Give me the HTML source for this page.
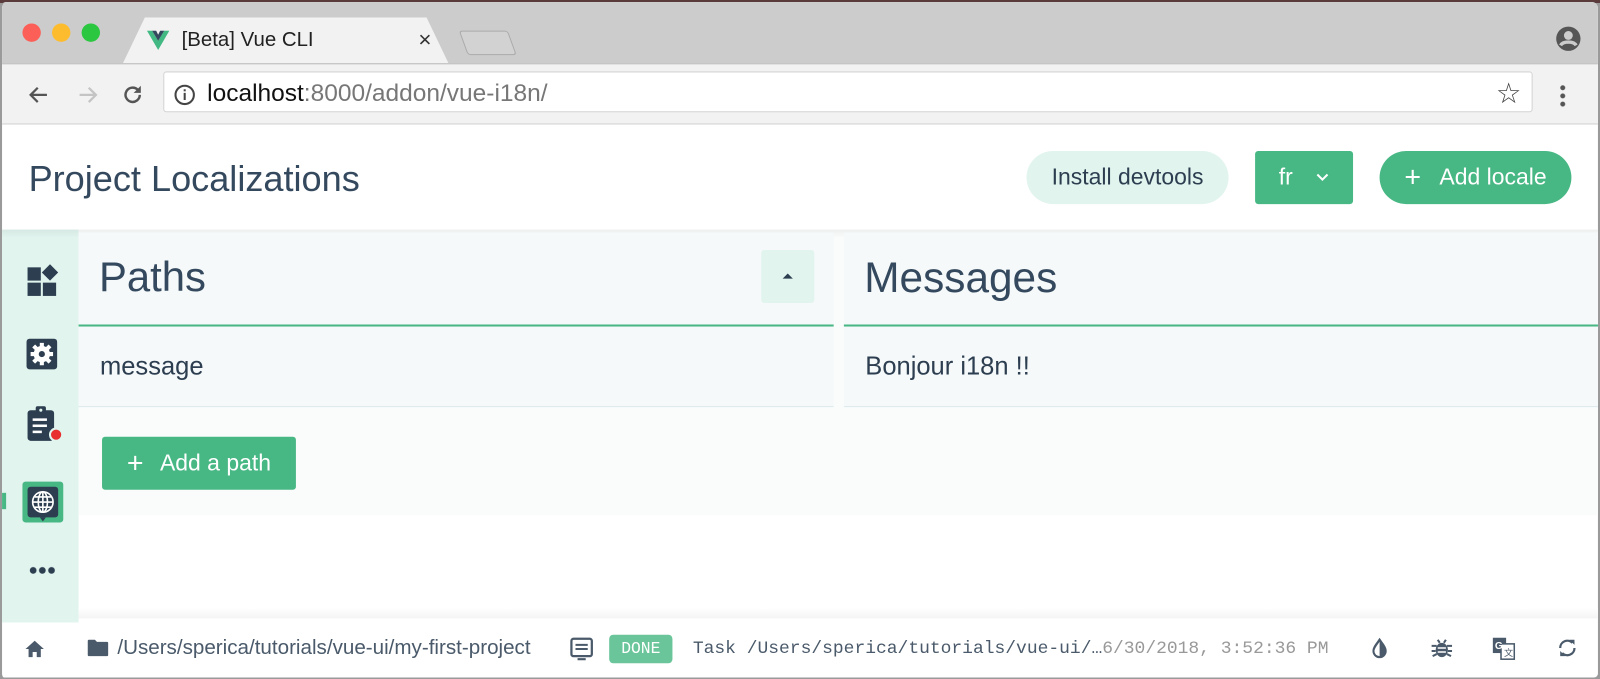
<!DOCTYPE html>
<html><head><meta charset="utf-8"><style>
*{box-sizing:border-box;margin:0;padding:0}
body{width:1600px;height:678px;overflow:hidden;background:#9a9a9a;font-family:"Liberation Sans",sans-serif;position:relative}
#sc{position:absolute;left:0;top:0;width:1568px;height:665px;transform:scale(1.0204);transform-origin:0 0}
.abs{position:absolute}
.win{left:0;top:2px;width:1566px;height:662px;background:#fff;border-radius:6px 6px 4px 4px;overflow:hidden;border-left:2px solid #9a9a9a}
.tabbar{left:0;top:0;width:100%;height:60px;background:#cccccc}
.toolbar{left:0;top:60px;width:100%;height:60px;background:#f2f2f2;border-top:1px solid #b8b8b8;border-bottom:1px solid #d0d0d0}
.dot{width:18px;height:18px;border-radius:50%;top:21px}
.tab{left:118px;top:15px;width:320px;height:46px;background:#f2f2f2;clip-path:polygon(0 100%,22px 0,calc(100% - 22px) 0,100% 100%)}
.url{left:158px;top:68px;width:1342px;height:40px;background:#fff;border:1px solid #d4d4d4;border-radius:3px}
.dk{color:#2c3e50}
.btn{display:flex;align-items:center;justify-content:center;font-size:22.5px}
</style></head><body>
<div style="position:absolute;left:0;top:0;width:1600px;height:3px;background:#5a3a3a"></div>
<div id="sc">
<div class="abs win">
 <div class="abs tabbar"></div>
 <div class="abs dot" style="left:20px;background:#fc5f57"></div>
 <div class="abs dot" style="left:49px;background:#fdbc2e"></div>
 <div class="abs dot" style="left:78px;background:#2bc740"></div>
 <div class="abs tab"></div>
 <svg class="abs" style="left:142px;top:28px" width="22" height="20" viewBox="0 0 22 20"><path d="M0 0h5l6 10 6-10h5L11 19z" fill="#42b983"/><path d="M5 0h4l2 4 2-4h4L11 10z" fill="#35495e"/></svg>
 <div class="abs" style="left:176px;top:26px;font-size:20px;color:#222">[Beta] Vue CLI</div>
 <div class="abs" style="left:408px;top:24px;font-size:22px;color:#333">×</div>
 <div class="abs" style="left:452px;top:28px;width:48px;height:24px;background:#d2d2d2;border:1px solid #aaa;transform:skewX(20deg);border-radius:3px"></div>
 <svg class="abs" style="left:1522px;top:23px" width="26" height="26" viewBox="0 0 24 24"><circle cx="12" cy="12" r="11" fill="#555"/><circle cx="12" cy="9" r="4" fill="#ccc"/><path d="M5 18c2-4 12-4 14 0" stroke="#ccc" stroke-width="3" fill="none"/></svg>
 <div class="abs toolbar"></div>
 <svg class="abs" style="left:24px;top:79px" width="24" height="24" viewBox="0 0 24 24"><path d="M20 12H5M11 5l-7 7 7 7" stroke="#555" stroke-width="2.2" fill="none"/></svg>
 <svg class="abs" style="left:72px;top:79px" width="24" height="24" viewBox="0 0 24 24"><path d="M4 12h15M13 5l7 7-7 7" stroke="#c4c4c4" stroke-width="2.2" fill="none"/></svg>
 <svg class="abs" style="left:116px;top:79px" width="24" height="24" viewBox="0 0 24 24"><path d="M19 12a7 7 0 1 1-2-5" stroke="#555" stroke-width="2.4" fill="none"/><path d="M20 3v7h-7z" fill="#555"/></svg>
 <div class="abs url"></div>
 <svg class="abs" style="left:168px;top:80px" width="22" height="22" viewBox="0 0 22 22"><circle cx="11" cy="11" r="9" stroke="#444" stroke-width="2" fill="none"/><rect x="10" y="9" width="2" height="7" fill="#444"/><rect x="10" y="5.5" width="2" height="2" fill="#444"/></svg>
 <div class="abs" style="left:201px;top:76px;font-size:24px;color:#111">localhost<span style="color:#777">:8000/addon/vue-i18n/</span></div>
 <div class="abs" style="left:1464px;top:73px;font-size:28px;color:#444">☆</div>
 <div class="abs" style="left:1527px;top:80px;width:5px;height:24px;background:radial-gradient(circle,#555 2.2px,transparent 2.6px) 0 0/5px 8px"></div>

 <div class="abs" style="left:26px;top:153px;font-size:35.4px;font-weight:300;color:#34495e">Project Localizations</div>
 <div class="abs btn dk" style="left:1004px;top:146px;width:198px;height:52px;background:#e1f4ee;border-radius:26px">Install devtools</div>
 <div class="abs btn" style="left:1228px;top:146px;width:96px;height:52px;background:#47b784;border-radius:3px;color:#fff">fr<svg style="margin-left:22px" width="14" height="10" viewBox="0 0 14 10"><path d="M2 2l5 5 5-5" stroke="#fff" stroke-width="2" fill="none"/></svg></div>
 <div class="abs btn" style="left:1350px;top:146px;width:188px;height:52px;background:#47b784;border-radius:26px;color:#fff"><span style="font-size:28px;font-weight:300;margin-right:18px">+</span>Add locale</div>

 <div class="abs" style="left:0;top:223px;width:75px;height:385px;background:#e1f4ee"></div>
 <div class="abs" style="left:75px;top:223px;width:1525px;height:280px;background:#fafcfc"></div>
 <div class="abs" style="left:0;top:223px;width:1600px;height:8px;background:linear-gradient(rgba(0,0,0,0.05),rgba(0,0,0,0))"></div>
 <svg class="abs" style="left:23px;top:256px" width="34" height="34" viewBox="0 0 34 34"><rect x="2" y="4" width="13" height="13" fill="#2c3e50"/><rect x="2" y="19" width="13" height="13" fill="#2c3e50"/><rect x="17" y="19" width="13" height="13" fill="#2c3e50"/><path d="M24 1l8 8-8 8-8-8z" fill="#2c3e50"/></svg>
 <svg class="abs" style="left:23px;top:329px" width="32" height="32" viewBox="0 0 32 32"><rect x="1" y="1" width="30" height="30" rx="3" fill="#2c3e50"/><circle cx="16" cy="16" r="8" fill="#fff"/><g stroke="#fff" stroke-width="4"><path d="M16 5v22M5 16h22M8 8l16 16M24 8L8 24"/></g><circle cx="16" cy="16" r="3" fill="#2c3e50"/></svg>
 <svg class="abs" style="left:24px;top:396px" width="38" height="36" viewBox="0 0 38 36"><rect x="1" y="4" width="26" height="30" rx="3" fill="#2c3e50"/><rect x="9" y="0" width="10" height="7" rx="2" fill="#2c3e50"/><circle cx="14" cy="4" r="1.5" fill="#e1f4ee"/><rect x="6" y="12" width="14" height="2.5" fill="#fff"/><rect x="6" y="18" width="14" height="2.5" fill="#fff"/><rect x="6" y="24" width="9" height="2.5" fill="#fff"/><circle cx="29" cy="28" r="6" fill="#e83030" stroke="#e1f4ee" stroke-width="2"/></svg>
 <div class="abs" style="left:0;top:481px;width:4px;height:16px;background:#47b784"></div>
 <div class="abs" style="left:20px;top:470px;width:40px;height:40px;background:#47b784;border-radius:3px"></div>
 <svg class="abs" style="left:24px;top:474px" width="32" height="36" viewBox="0 0 32 36"><rect x="1" y="1" width="30" height="30" rx="3" fill="#2c3e50"/><path d="M13 31l3 4 3-4z" fill="#2c3e50"/><g stroke="#fff" stroke-width="1.6" fill="none"><circle cx="16" cy="16" r="10"/><ellipse cx="16" cy="16" rx="4.5" ry="10"/><path d="M6 16h20M8 11h16M8 21h16M16 6v20"/></g></svg>
 <div class="abs" style="left:26px;top:553px;width:26px;height:8px;background:radial-gradient(circle,#2c3e50 3px,transparent 3.5px) 0 0/9px 8px"></div>

 <div class="abs" style="left:75px;top:226px;width:740px;height:171px;background:#f5f9fa;border-bottom:1px solid #dbe8ea"></div>
 <div class="abs" style="left:75px;top:316px;width:740px;height:2px;background:#47b784"></div>
 <div class="abs" style="left:95px;top:246px;font-size:41px;font-weight:300;color:#34495e">Paths</div>
 <div class="abs" style="left:744px;top:243px;width:52px;height:52px;background:#e1f4ee;border-radius:3px"></div>
 <svg class="abs" style="left:764px;top:265px" width="12" height="8" viewBox="0 0 12 8"><path d="M1 6l5-5 5 5z" fill="#2c3e50"/></svg>
 <div class="abs dk" style="left:96px;top:343px;font-size:25px">message</div>
 <div class="abs" style="left:825px;top:226px;width:775px;height:171px;background:#f5f9fa;border-bottom:1px solid #dbe8ea"></div>
 <div class="abs" style="left:825px;top:316px;width:775px;height:2px;background:#47b784"></div>
 <div class="abs" style="left:845px;top:246px;font-size:41.5px;font-weight:300;color:#34495e">Messages</div>
 <div class="abs dk" style="left:846px;top:343px;font-size:25px">Bonjour i18n !!</div>
 <div class="abs btn" style="left:98px;top:426px;width:190px;height:52px;background:#47b784;border-radius:3px;color:#fff"><span style="font-size:28px;font-weight:300;margin-right:16px">+</span>Add a path</div>

 <div class="abs" style="left:75px;top:594px;width:1525px;height:10px;background:linear-gradient(#fff,#f4f4f4)"></div>
 <svg class="abs" style="left:22px;top:624px" width="20" height="20" viewBox="0 0 20 20"><path d="M10 2L1 10h3v8h4v-5h4v5h4v-8h3z" fill="#4a5a6a"/></svg>
 <svg class="abs" style="left:83px;top:624px" width="22" height="18" viewBox="0 0 22 18"><path d="M1 2a1 1 0 0 1 1-1h6l2 2h10a1 1 0 0 1 1 1v12a1 1 0 0 1-1 1H2a1 1 0 0 1-1-1z" fill="#4a5a6a"/></svg>
 <div class="abs" style="left:113px;top:622px;font-size:20.2px;color:#4a5a6a">/Users/sperica/tutorials/vue-ui/my-first-project</div>
 <svg class="abs" style="left:556px;top:622px" width="24" height="24" viewBox="0 0 24 24"><rect x="2" y="2" width="20" height="17" rx="2" stroke="#4a5a6a" stroke-width="2.2" fill="none"/><path d="M6 8h12M6 12h12M8 22h8" stroke="#4a5a6a" stroke-width="2"/></svg>
 <div class="abs" style="left:595px;top:620px;width:62px;height:28px;background:#6ac69a;border-radius:4px;color:#fff;font-family:'Liberation Mono',monospace;font-size:16px;display:flex;align-items:center;justify-content:center">DONE</div>
 <div class="abs" style="left:677px;top:624px;font-family:'Liberation Mono',monospace;font-size:17.6px;color:#4a5a6a">Task /Users/sperica/tutorials/vue-ui/…<span style="color:#999">6/30/2018, 3:52:36 PM</span></div>
 <svg class="abs" style="left:1340px;top:622px" width="20" height="22" viewBox="0 0 20 22"><path d="M10 1C6 7 3 10 3 14a7 7 0 0 0 14 0c0-4-3-7-7-13z" fill="#4a5a6a"/><path d="M10 5c-3 4-5 7-5 9a5 5 0 0 0 5 5z" fill="#fff"/></svg>
 <svg class="abs" style="left:1400px;top:622px" width="22" height="22" viewBox="0 0 22 22"><ellipse cx="11" cy="13" rx="6" ry="7" fill="#4a5a6a"/><path d="M1 9h5M1 14h4M2 19l4-2M21 9h-5M21 14h-4M20 19l-4-2M7 3l2 3M15 3l-2 3" stroke="#4a5a6a" stroke-width="2"/><path d="M7 11h8M7 15h8" stroke="#fff" stroke-width="1.5"/></svg>
 <svg class="abs" style="left:1460px;top:622px" width="24" height="24" viewBox="0 0 24 24"><rect x="1" y="1" width="13" height="15" fill="#4a5a6a"/><rect x="9" y="7" width="13" height="15" fill="#fff" stroke="#4a5a6a" stroke-width="1.5"/><text x="3" y="12" font-size="10" fill="#fff" font-family="Liberation Sans" font-weight="bold">G</text><text x="12" y="19" font-size="9" fill="#4a5a6a" font-family="Liberation Sans">文</text></svg>
 <svg class="abs" style="left:1523px;top:622px" width="22" height="22" viewBox="0 0 22 22"><path d="M4 11a7 7 0 0 1 12-5M18 11a7 7 0 0 1-12 5" stroke="#4a5a6a" stroke-width="2.2" fill="none"/><path d="M13 3h5v5zM9 19H4v-5z" fill="#4a5a6a"/></svg>
</div>
</div>
</body></html>
